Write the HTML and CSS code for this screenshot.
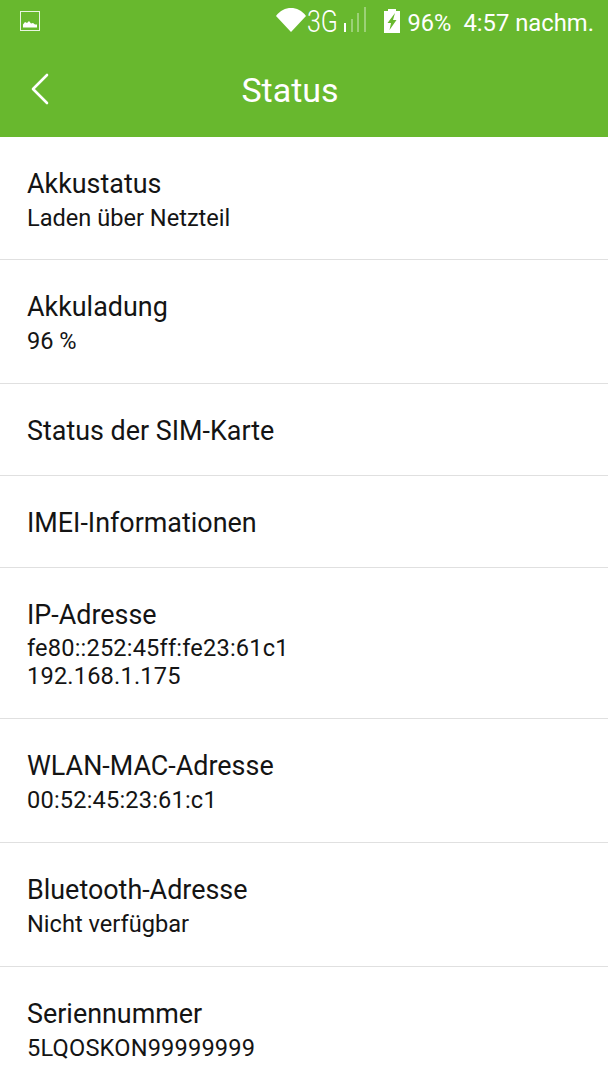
FILE: index.html
```html
<!DOCTYPE html>
<html lang="de">
<head>
<meta charset="utf-8">
<title>Status</title>
<link rel="stylesheet" href="styles.css">
</head>
<body>
<header class="header">
  <div class="statusbar">
    <svg class="pic-icon" width="20" height="20" viewBox="0 0 20 20"><rect x="0.5" y="0.5" width="19" height="19" fill="none" stroke="#fff" stroke-opacity=".85" stroke-width="1"/><path d="M3 16.500v-3l2-2.500 2 1 2-2 2 2.500 2-.5 2 1.500 2 0v3z" fill="#fff"/></svg>
    <div class="status-right">
      <svg class="wifi" width="30" height="24" viewBox="0 0 30 24"><path d="M0 8C8-2.600 22-2.600 30 8L15 24z" fill="#fff"/></svg>
      <span class="net">3G</span>
      <svg class="signal" width="22" height="25" viewBox="0 0 22 25"><rect x="0" y="16" width="2" height="9" fill="#fff"/><rect x="7" y="12" width="2" height="13" fill="#fff" opacity=".35"/><rect x="13" y="6" width="2" height="19" fill="#fff" opacity=".35"/><rect x="20" y="0" width="2" height="25" fill="#fff" opacity=".35"/></svg>
      <svg class="battery" width="16" height="24" viewBox="0 0 16 24"><path d="M4 0h8v2h4v22H0V2h4z" fill="#fff"/><path d="M11 4 3.500 14H7L5.500 21 12.500 11H9z" fill="#68b82e"/></svg>
      <span class="pct">96%</span>
      <span class="clock">4:57 nachm.</span>
    </div>
  </div>
  <div class="titlebar">
    <svg class="back" width="18" height="34" viewBox="0 0 18 34"><path d="M16 3 2 17l14 14" fill="none" stroke="#fff" stroke-width="2.600" stroke-linecap="round" stroke-linejoin="round"/></svg>
    <h1 class="title">Status</h1>
  </div>
</header>
<main class="list">
  <section class="row row-first"><div class="label">Akkustatus</div><div class="value">Laden über Netzteil</div></section>
  <section class="row"><div class="label">Akkuladung</div><div class="value">96 %</div></section>
  <section class="row row-single"><div class="label">Status der SIM-Karte</div></section>
  <section class="row row-single"><div class="label">IMEI-Informationen</div></section>
  <section class="row row-double"><div class="label">IP-Adresse</div><div class="value numeric">fe80::252:45ff:fe23:61c1<br>192.168.1.175</div></section>
  <section class="row"><div class="label">WLAN-MAC-Adresse</div><div class="value numeric">00:52:45:23:61:c1</div></section>
  <section class="row"><div class="label">Bluetooth-Adresse</div><div class="value">Nicht verfügbar</div></section>
  <section class="row row-last"><div class="label">Seriennummer</div><div class="value numeric">5LQOSKON99999999</div></section>
</main>
</body>
</html>
```
FILE: styles.css
```css
* { box-sizing: border-box; }
html, body { margin: 0; padding: 0; }
body {
  width: 608px;
  height: 1080px;
  overflow: hidden;
  background: #fff;
  font-family: Roboto, "Liberation Sans", sans-serif;
  color: #141414;
}
.header {
  background: #68b82e;
  height: 137px;
  color: #fff;
}
.statusbar {
  height: 44px;
  display: flex;
  align-items: flex-start;
  justify-content: space-between;
  padding: 11px 14px 0 20px;
}
.status-right {
  display: flex;
  align-items: flex-end;
  height: 21px;
}
.wifi { margin-right: 1px; }
.net {
  display: inline-block;
  width: 30px;
  font-size: 32px;
  line-height: 32px;
  font-weight: 300;
  margin: 0 7px -5px 0;
  transform: scaleX(.78);
  transform-origin: left center;
}
.signal { margin-right: 18px; }
.battery { margin: 0 8px -1px 0; }
.pct { font-size: 23.600px; line-height: 28px; margin: 0 12px -5px 0; }
.clock { font-size: 23.800px; line-height: 28px; margin-bottom: -5px; }
.titlebar {
  height: 93px;
  display: flex;
  align-items: center;
  justify-content: center;
  position: relative;
  padding-bottom: 1px;
}
.back { position: absolute; left: 31px; top: 28px; }
.title {
  margin: 0 0 0 -28px;
  font-size: 34px;
  font-weight: 400;
  line-height: 40px;
}
.list { display: flex; flex-direction: column; }
.row {
  padding: 31px 27px 26px;
  border-bottom: 1px solid #e0e0e0;
  height: 124px;
}
.row-first { height: 123px; }
.row-single { height: 92px; }
.row-double { height: 151px; }
.label { font-size: 26.900px; line-height: 32px; }
.value { font-size: 23.600px; line-height: 28px; margin-top: 3.500px; }
.row-double .value { line-height: 28px; margin-top: 3px; }
.row-last { border-bottom: 0; }
.numeric { letter-spacing: .18px; }
```
